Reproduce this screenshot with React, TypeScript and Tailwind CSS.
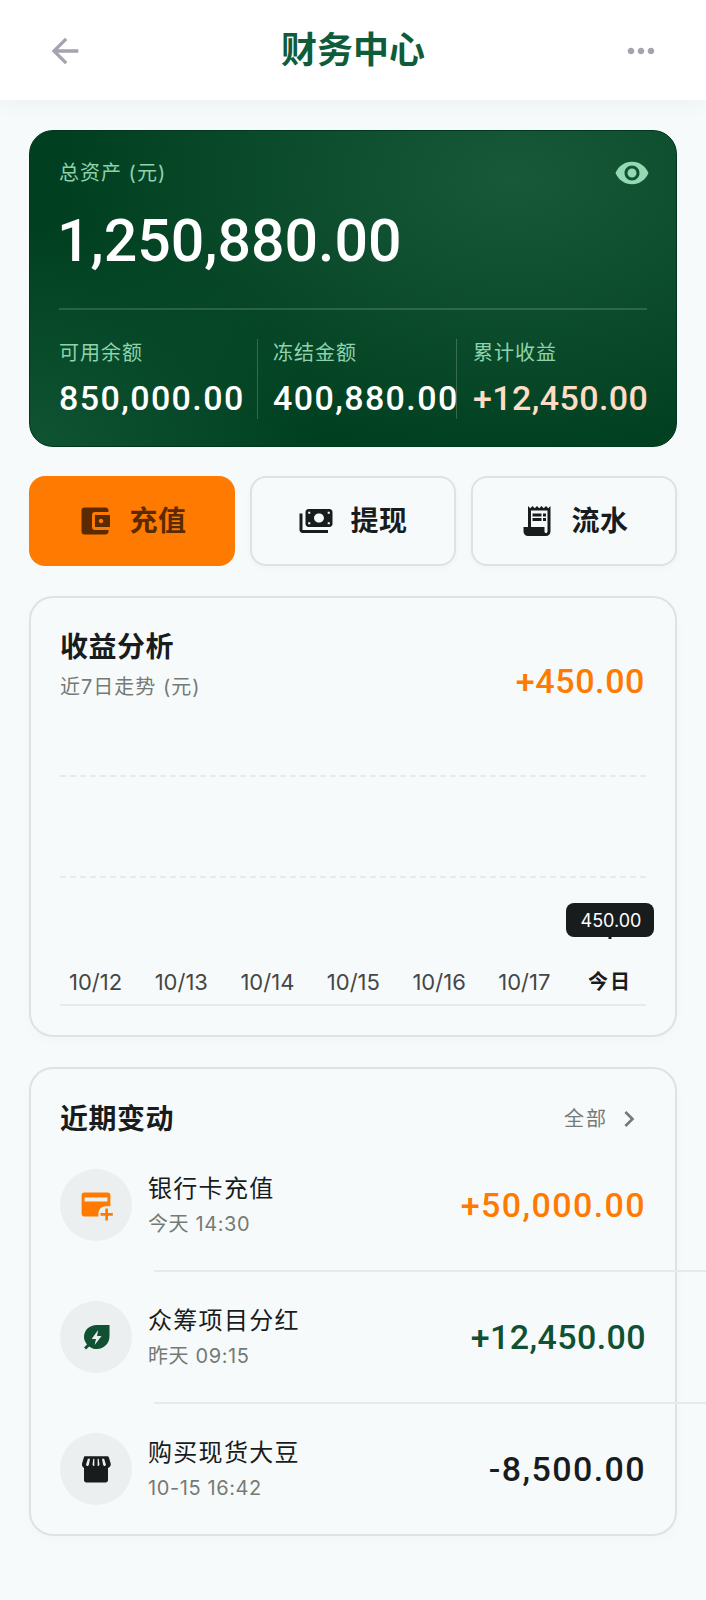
import React from "react";
import { MdArrowBack, MdMoreHoriz, MdVisibility, MdAccountBalanceWallet, MdReceiptLong, MdChevronRight } from "react-icons/md";

const CJK = "font-['Inter','Noto_Sans_CJK_SC',sans-serif]";
const NUM = "font-['Roboto','Noto_Sans_CJK_SC',sans-serif]";

function AddCard() {
  return (
    <svg width="36" height="36" viewBox="0 0 24 24" fill="#ff7a00">
      <path fillRule="evenodd" d="M4.2 3.6h15.6c1.1 0 1.8.8 1.8 1.8v7.4h-3.6a5 5 0 0 0-4.4 4.4v2.4H4.2c-1.1 0-1.8-.8-1.800-1.800V5.400c0-1 .7-1.800 1.800-1.800zM4.400 7v2.600h15.200V7H4.400z" />
      <path d="M18.200 14.400h1.800v3h3.200v1.800H20v3.200h-1.800v-3.200H15v-1.800h3.200z" />
    </svg>
  );
}

function Leaf() {
  return (
    <svg width="36" height="36" viewBox="0 0 24 24" fill="#0f5132">
      <path fillRule="evenodd" d="M21 4v7.500c0 4.800-3.700 8.500-8.500 8.500-1.900 0-3.700-.6-5.100-1.700L5.400 20.400 4 19l2-2c-1.100-1.400-2-3-2-5 0-4.700 3.800-8 8.500-8H21zm-7.600 3.400-4.300 6h2.900l-.9 4 4.600-6h-3l.7-4z" />
    </svg>
  );
}

function Store() {
  return (
    <svg width="36" height="36" viewBox="0 0 24 24" fill="#191c1d">
      <path fillRule="evenodd" d="M4.600 3.500h14.800c.6 0 1 .3 1.200.9l1.200 4c.3 1.300-.5 2.600-1.800 2.900v8.200c0 .8-.7 1.500-1.500 1.500h-13c-.8 0-1.500-.7-1.500-1.500v-8.200C3.200 11 2.400 9.700 2.700 8.400l1.200-4c.1-.6.3-.9.7-.9zM6.600 5.200 5.400 9c0 .6.4 1 .9 1s.9-.4 1-1l.7-3.800H6.600zm3.600 0L9.700 9c0 .6.500 1 1.100 1h.1V5.200h-.7zm2.900 0V10h.1c.6 0 1.100-.4 1.100-1l-.5-3.800h-.7zm2.900 0 .7 3.800c.1.600.5 1 1 1s.9-.4.9-1l-1.200-3.800h-1.400z" />
    </svg>
  );
}

function Bills() {
  return (
    <svg width="36" height="36" viewBox="0 0 24 24" fill="#191c1d">
      <path fillRule="evenodd" d="M7 4h14c1.100 0 2 .9 2 2v8c0 1.100-.9 2-2 2H7c-1.100 0-2-.9-2-2V6c0-1.100.9-2 2-2zm7 3c-1.900 0-3.300 1.300-3.300 3s1.400 3 3.300 3 3.300-1.300 3.300-3-1.400-3-3.300-3zM6.800 5.800v1.400h1.400V5.800H6.800zm13 0v1.400h1.400V5.800h-1.400zM6.800 12.800v1.400h1.400v-1.400H6.800zm13 0v1.400h1.400v-1.400h-1.400z" />
      <path d="M1 7h2v11h17v2H3c-1.100 0-2-.9-2-2V7z" />
    </svg>
  );
}

function Stat({ label, value, valueClass, className }: { label: string; value: string; valueClass?: string; className: string }) {
  return (
    <div className={className}>
      <div className={`text-[20px] leading-[28px] tracking-[1px] text-[#8fd3ac] ${CJK}`}>{label}</div>
      <div className={`mt-[13px] whitespace-nowrap text-[34px] leading-[36px] font-medium ${NUM} ${valueClass ?? "tracking-[1.4px] text-white"}`}>{value}</div>
    </div>
  );
}

function ActionButton({ icon, label, primary }: { icon: React.ReactNode; label: string; primary?: boolean }) {
  return (
    <div className={`flex h-[90px] items-center justify-center gap-[16px] rounded-[16px] ${primary ? "bg-[#ff7a00] text-[#5c2a00]" : "border-2 border-[#dde3df] bg-[#f7fafb] text-[#191c1d] shadow-[0_2px_6px_rgba(0,0,0,0.03)]"}`}>
      {icon}
      <span className={`text-[28px] font-bold tracking-[0.5px] ${CJK}`}>{label}</span>
    </div>
  );
}

function Row({ icon, title, sub, amount, color, divider }: { icon: React.ReactNode; title: string; sub: string; amount: string; color: string; divider?: boolean }) {
  return (
    <div>
      <div className="flex items-center">
        <div className="flex h-[72px] w-[72px] items-center justify-center rounded-full bg-[#ecefef]">{icon}</div>
        <div className="ml-[16px] flex-1 pt-[3px]">
          <div className={`text-[24px] leading-[34px] tracking-[1.3px] text-[#191c1d] ${CJK}`}>{title}</div>
          <div className={`mt-[1px] text-[20px] leading-[34px] tracking-[0.6px] text-[#757a76] ${CJK}`}>{sub}</div>
        </div>
        <div className={`text-[34px] font-medium ${NUM} ${color}`}>{amount}</div>
      </div>
      {divider && <div className="my-[29px] ml-[94px] h-[2px] w-[560px] bg-[#e6eaea]" />}
    </div>
  );
}

export default function App() {
  const dates = ["10/12", "10/13", "10/14", "10/15", "10/16", "10/17"];
  return (
    <div className={`h-[1600px] w-[706px] overflow-hidden bg-[#f7fafb] ${CJK}`}>
      <header className="flex h-[100px] items-center justify-between bg-white px-[45px] shadow-[0_4px_20px_rgba(0,0,0,0.04)]">
        <MdArrowBack size={40} color="#a5a3ae" className="mt-[2px]" />
        <h1 className="text-[36px] font-bold text-[#0f5c3a]">财务中心</h1>
        <MdMoreHoriz size={40} color="#a5a3ae" className="mt-[2px]" />
      </header>

      <main className="px-[29px] pt-[30px]">
        <section className="h-[317px] rounded-[24px] border border-[#00381c] bg-[radial-gradient(ellipse_70%_90%_at_75%_15%,#18593a_0%,rgba(24,89,58,0)_100%),radial-gradient(ellipse_45%_70%_at_0%_100%,#0f5433_0%,rgba(15,84,51,0)_100%),linear-gradient(#004021,#004021)] px-[29px] pt-[28px]">
          <div className="flex h-[28px] items-center justify-between">
            <div className="text-[20px] leading-[28px] tracking-[1px] text-[#8fd3ac]">总资产 (元)</div>
            <MdVisibility size={36} color="#93d9b3" className="-mr-[3px]" />
          </div>
          <div className={`mt-[19px] -ml-[2px] text-[59px] leading-[70px] font-medium text-white ${NUM}`}>1,250,880.00</div>
          <div className="mt-[32px] h-[2px] bg-white/15" />
          <div className="mt-[29px] flex h-[80px]">
            <Stat label="可用余额" value="850,000.00" className="w-[199px] shrink-0 border-r border-white/20" />
            <Stat label="冻结金额" value="400,880.00" className="w-[199px] shrink-0 border-r border-white/20 pl-[15px]" />
            <Stat label="累计收益" value="+12,450.00" valueClass="tracking-[0.4px] text-[#ffdcc4]" className="pl-[16px]" />
          </div>
        </section>

        <div className="mt-[29px] grid grid-cols-3 gap-[15px]">
          <ActionButton primary icon={<MdAccountBalanceWallet size={36} color="#5c2a00" />} label="充值" />
          <ActionButton icon={<Bills />} label="提现" />
          <ActionButton icon={<MdReceiptLong size={36} color="#191c1d" />} label="流水" />
        </div>

        <section className="mt-[30px] h-[441px] rounded-[24px] border-2 border-[#dde3df] px-[29px] pt-[30px] shadow-[0_4px_12px_rgba(0,0,0,0.02)]">
          <div className="flex items-start justify-between">
            <div>
              <div className="text-[28px] leading-[38px] font-bold tracking-[0.5px] text-[#191c1d]">收益分析</div>
              <div className="mt-[7px] text-[20px] leading-[28px] tracking-[1px] text-[#757a76]">近7日走势 (元)</div>
            </div>
            <div className={`mt-[33px] pr-[1px] text-[34px] leading-[40px] font-medium tracking-[0.6px] text-[#ff7a00] ${NUM}`}>+450.00</div>
          </div>
          <div className="relative mt-[11px]">
            <div className="h-[65px] border-b-2 border-dashed border-[#e6eaea]" />
            <div className="h-[101px] border-b-2 border-dashed border-[#e6eaea]" />
            <div className="absolute right-[-8px] top-[191px] flex h-[34px] w-[88px] items-center justify-center rounded-[8px] bg-[#191c1d] pl-[2px] text-[18px] text-white">
              450.00
              <span className="absolute bottom-[-2px] left-1/2 h-[2px] w-[3px] -translate-x-1/2 bg-[#191c1d]" />
            </div>
            <div className="mt-[88px] flex items-center justify-between border-b-2 border-[#e6eaea] px-[9px] pb-[6px]">
              {dates.map((d) => (
                <span key={d} className="text-[22px] leading-[32px] text-[#444746] font-['Inter',sans-serif]">{d}</span>
              ))}
              <span className="w-[54px] text-center text-[20px] leading-[32px] font-bold tracking-[2px] text-[#191c1d]">今日</span>
            </div>
          </div>
        </section>

        <section className="mt-[30px] h-[469px] rounded-[24px] border-2 border-[#dde3df] px-[29px] pt-[30px] shadow-[0_4px_12px_rgba(0,0,0,0.02)]">
          <div className="flex items-center justify-between">
            <div className="text-[28px] leading-[40px] font-bold tracking-[0.5px] text-[#191c1d]">近期变动</div>
            <div className="flex items-center gap-[5px] pr-[9px] text-[20px] tracking-[2px] text-[#757a76]">
              全部
              <MdChevronRight size={32} color="#757a76" className="-mr-[8px]" />
            </div>
          </div>
          <div className="mt-[30px]">
            <Row icon={<AddCard />} title="银行卡充值" sub="今天 14:30" amount="+50,000.00" color="tracking-[1.4px] text-[#ff7a00]" divider />
            <Row icon={<Leaf />} title="众筹项目分红" sub="昨天 09:15" amount="+12,450.00" color="tracking-[0.4px] text-[#0f5132]" divider />
            <Row icon={<Store />} title="购买现货大豆" sub="10-15 16:42" amount="-8,500.00" color="tracking-[1.4px] text-[#191c1d]" />
          </div>
        </section>
      </main>
    </div>
  );
}
